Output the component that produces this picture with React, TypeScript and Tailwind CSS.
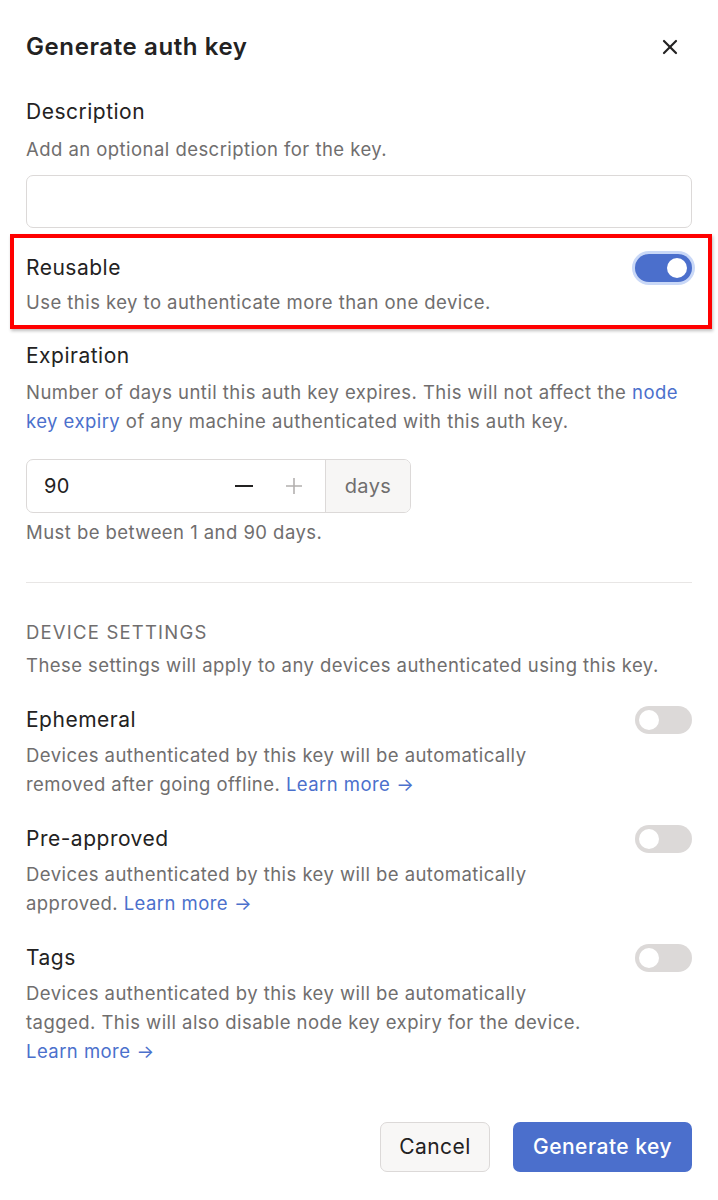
import { X } from 'lucide-react'

const Toggle = ({ on = false }: { on?: boolean }) => (
  <div
    className={
      on
        ? 'relative flex h-[28px] w-[57px] shrink-0 items-center justify-end rounded-full bg-[#4b6fcc] px-[5px] ring-[3px] ring-[#c9d8f7]'
        : 'relative flex h-[28px] w-[57px] shrink-0 items-center justify-start rounded-full bg-[#dcd9d8] px-[4px]'
    }
  >
    <span className="block h-[20px] w-[20px] rounded-full bg-white" />
  </div>
)

const Arrow = () => <span className="ml-[6px]">→</span>

const SettingRow = ({
  title,
  children,
}: {
  title: string
  children: React.ReactNode
}) => (
  <div className="mt-[26px]">
    <div className="flex items-center justify-between">
      <div className="text-[21px] leading-[28px] tracking-[0.5px] text-[#232222]">{title}</div>
      <Toggle />
    </div>
    <p className="mt-[7px] text-[18.5px] leading-[29px] tracking-[0.45px] text-[#706e6e]">{children}</p>
  </div>
)

export default function App() {
  return (
    <div
      className="min-h-[1200px] w-full bg-white px-[26px] pb-[28px]"
      style={{ fontFamily: 'Inter, "Noto Sans", sans-serif' }}
    >
      {/* Header */}
      <div className="flex items-center justify-between pt-[31px]">
        <h1 className="text-[24px] font-semibold leading-[32px] tracking-[0.6px] text-[#232222]">
          Generate auth key
        </h1>
        <X className="mr-[10px] h-[24px] w-[24px] text-[#232222]" strokeWidth={2.2} />
      </div>

      {/* Description */}
      <div className="mt-[35px] text-[21px] leading-[28px] tracking-[0.5px] text-[#232222]">Description</div>
      <p className="mt-[9px] text-[18.5px] leading-[29px] tracking-[0.45px] text-[#706e6e]">
        Add an optional description for the key.
      </p>
      <div className="mt-[11px] h-[53px] w-full rounded-[7px] border border-[#dcd9d8] bg-white" />

      {/* Reusable */}
      <div className="relative mt-[26px]">
        <div className="pointer-events-none absolute -top-[20px] -bottom-[12px] -left-[16px] -right-[20px] border-[4px] border-[#ff0000] shadow-[1px_2px_3px_rgba(0,0,0,0.25)]" />
        <div className="flex items-center justify-between">
          <div className="text-[21px] leading-[28px] tracking-[0.5px] text-[#232222]">Reusable</div>
          <Toggle on />
        </div>
        <p className="mt-[6px] text-[18.5px] leading-[29px] tracking-[0.45px] text-[#706e6e]">
          Use this key to authenticate more than one device.
        </p>
      </div>

      {/* Expiration */}
      <div className="mt-[25px] text-[21px] leading-[28px] tracking-[0.5px] text-[#232222]">Expiration</div>
      <p className="mt-[8px] text-[18.5px] leading-[29px] tracking-[0.45px] text-[#706e6e]">
        Number of days until this auth key expires. This will not affect the{' '}
        <span className="text-[#4b70cc]">node</span>
        <br />
        <span className="text-[#4b70cc]">key expiry</span> of any machine authenticated with this auth key.
      </p>

      <div className="mt-[23px] flex h-[54px] w-[385px] overflow-hidden rounded-[7px] border border-[#dcd9d8]">
        <div className="flex flex-1 items-center pl-[17px] text-[20px] tracking-[0.4px] text-[#232222]">90</div>
        <div className="flex items-center gap-[30px] pr-[21px]">
          <svg width="20" height="20" viewBox="0 0 20 20" className="text-[#232222]">
            <path d="M1 10h18" stroke="currentColor" strokeWidth="2" />
          </svg>
          <svg width="20" height="20" viewBox="0 0 20 20" className="text-[#b3b0af]">
            <path d="M2 10h16M10 2v16" stroke="currentColor" strokeWidth="1.6" />
          </svg>
        </div>
        <div className="flex w-[85px] items-center justify-center border-l border-[#dcd9d8] bg-[#f7f6f5] text-[20px] tracking-[0.4px] text-[#706e6e]">
          days
        </div>
      </div>
      <p className="mt-[5px] text-[18.5px] leading-[29px] tracking-[0.45px] text-[#706e6e]">
        Must be between 1 and 90 days.
      </p>

      <div className="mt-[35px] h-px w-full bg-[#e8e6e5]" />

      {/* Device settings */}
      <div className="mt-[35px] text-[18.5px] uppercase leading-[28px] tracking-[1.2px] text-[#706e6e]">
        Device settings
      </div>
      <p className="mt-[5px] text-[18.5px] leading-[29px] tracking-[0.45px] text-[#706e6e]">
        These settings will apply to any devices authenticated using this key.
      </p>

      <SettingRow title="Ephemeral">
        Devices authenticated by this key will be automatically
        <br />
        removed after going offline.{' '}
        <span className="text-[#4b70cc]">
          Learn more<Arrow />
        </span>
      </SettingRow>

      <SettingRow title="Pre-approved">
        Devices authenticated by this key will be automatically
        <br />
        approved.{' '}
        <span className="text-[#4b70cc]">
          Learn more<Arrow />
        </span>
      </SettingRow>

      <SettingRow title="Tags">
        Devices authenticated by this key will be automatically
        <br />
        tagged. This will also disable node key expiry for the device.
        <br />
        <span className="text-[#4b70cc]">
          Learn more<Arrow />
        </span>
      </SettingRow>

      {/* Footer */}
      <div className="mt-[56px] flex justify-end gap-[23px]">
        <button className="h-[50px] w-[110px] rounded-[7px] border border-[#dcd9d8] bg-[#f8f7f6] text-[21px] tracking-[0.4px] text-[#232222]">
          Cancel
        </button>
        <button className="h-[50px] w-[179px] rounded-[7px] bg-[#4b6fcc] text-[21px] font-medium tracking-[0.5px] text-white">
          Generate key
        </button>
      </div>
    </div>
  )
}
